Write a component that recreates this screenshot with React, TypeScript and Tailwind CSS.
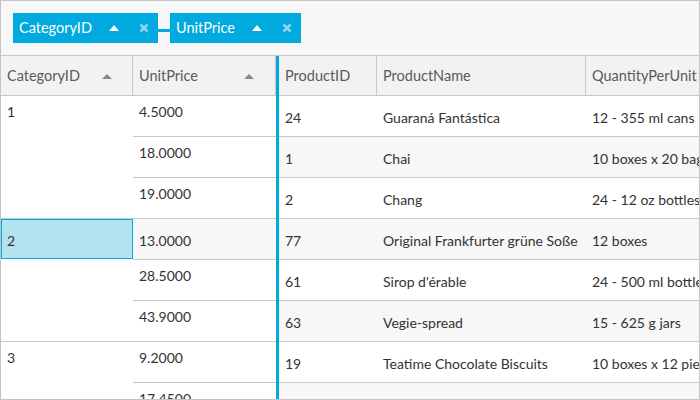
import React from "react";

const FONT = { fontFamily: 'Lato, "Noto Sans", sans-serif' };

function ChipArrow() {
  return (
    <svg width="10" height="6" viewBox="0 0 10 6" className="shrink-0">
      <polygon points="0,6 5,0 10,6" fill="#ffffff" />
    </svg>
  );
}

function ChipX() {
  return (
    <svg width="10" height="10" viewBox="0 0 10 10" className="shrink-0">
      <path d="M1.5 1.5 L8.5 8.5 M8.5 1.5 L1.5 8.5" stroke="#8fd5ef" strokeWidth="2.6" strokeLinecap="butt" />
    </svg>
  );
}

function HeadArrow() {
  return (
    <svg width="10" height="5" viewBox="0 0 10 5" className="shrink-0">
      <polygon points="0,5 5,0 10,5" fill="#8a8a8a" />
    </svg>
  );
}

function Chip({ label, width }: { label: string; width: string }) {
  return (
    <div className={`${width} h-[30px] bg-[#00a9de] flex items-center pl-[6px] pr-[9px] text-white text-[14.5px]`}>
      <span className="flex-1 leading-none">{label}</span>
      <ChipArrow />
      <div className="w-[20px]" />
      <ChipX />
    </div>
  );
}

type Row = { id: string; name: string; qty: string };

const rightRows: Row[] = [
  { id: "24", name: "Guaraná Fantástica", qty: "12 - 355 ml cans" },
  { id: "1", name: "Chai", qty: "10 boxes x 20 bags" },
  { id: "2", name: "Chang", qty: "24 - 12 oz bottles" },
  { id: "77", name: "Original Frankfurter grüne Soße", qty: "12 boxes" },
  { id: "61", name: "Sirop d'érable", qty: "24 - 500 ml bottles" },
  { id: "63", name: "Vegie-spread", qty: "15 - 625 g jars" },
  { id: "19", name: "Teatime Chocolate Biscuits", qty: "10 boxes x 12 pieces" },
  { id: "", name: "", qty: "" },
];

function PriceCell({ value, last, gray, center }: { value: string; last?: boolean; gray?: boolean; center?: boolean }) {
  return (
    <div
      className={`h-[41px] pl-[6px] whitespace-nowrap ${last ? "" : "border-b border-[#c8c8c8]"} ${gray ? "bg-[#f7f7f7]" : "bg-white"} ${center ? "flex items-center pt-[3px]" : "pt-[5px]"}`}
    >
      {value}
    </div>
  );
}

export default function App() {
  return (
    <div
      className="w-[700px] h-[400px] border border-[#c4c4c4] flex flex-col overflow-hidden bg-white text-[14px] text-[#333333]"
      style={FONT}
    >
      {/* group panel */}
      <div className="h-[55px] shrink-0 bg-[#f7f7f7] border-b border-[#c8c8c8] flex pl-[12px] pt-[12px]">
        <Chip label="CategoryID" width="w-[145px]" />
        <div className="w-[12px] h-[3px] mt-[16px] bg-[#00a9de]" />
        <Chip label="UnitPrice" width="w-[131px]" />
      </div>

      {/* main */}
      <div className="flex flex-1 min-h-0">
        {/* left frozen pane */}
        <div className="w-[275px] shrink-0 flex flex-col">
          <div className="h-[40px] shrink-0 flex bg-[#f2f2f2] border-b border-[#c8c8c8] text-[#5a5a5a] text-[14.5px]">
            <div className="w-[132px] border-r border-[#c8c8c8] flex items-center pl-[6px] pr-[20px] pt-[1px]">
              <span className="flex-1">CategoryID</span>
              <HeadArrow />
            </div>
            <div className="w-[143px] border-r border-[#c8c8c8] flex items-center pl-[6px] pr-[21px] pt-[1px]">
              <span className="flex-1">UnitPrice</span>
              <HeadArrow />
            </div>
          </div>

          {/* group 1 */}
          <div className="flex border-b border-[#c8c8c8] shrink-0">
            <div className="w-[132px] pl-[6px] pt-[5px]">1</div>
            <div className="w-[143px] flex flex-col">
              <PriceCell value="4.5000" />
              <PriceCell value="18.0000" />
              <div className="h-[40px] pl-[6px] pt-[5px]">19.0000</div>
            </div>
          </div>

          {/* group 2 */}
          <div className="flex border-b border-[#c8c8c8] shrink-0">
            <div className="w-[132px] flex flex-col">
              <div className="h-[40px] bg-[#b3e2f0] border border-[#00a9de] flex items-center pl-[5px] pt-[2px]">2</div>
            </div>
            <div className="w-[143px] flex flex-col">
              <PriceCell value="13.0000" gray center />
              <PriceCell value="28.5000" />
              <div className="h-[40px] pl-[6px] pt-[5px]">43.9000</div>
            </div>
          </div>

          {/* group 3 */}
          <div className="flex shrink-0">
            <div className="w-[132px] pl-[6px] pt-[5px]">3</div>
            <div className="w-[143px] flex flex-col">
              <PriceCell value="9.2000" />
              <PriceCell value="17.4500" />
            </div>
          </div>
        </div>

        {/* frozen splitter */}
        <div className="w-[3px] shrink-0 bg-[#00a9de]" />

        {/* right pane */}
        <div className="flex-1 min-w-0 flex flex-col">
          <div className="h-[40px] shrink-0 flex bg-[#f2f2f2] border-b border-[#c8c8c8] text-[#5a5a5a] text-[14.5px]">
            <div className="w-[98px] shrink-0 border-r border-[#c8c8c8] flex items-center pl-[6px] pt-[1px]">ProductID</div>
            <div className="w-[209px] shrink-0 border-r border-[#c8c8c8] flex items-center pl-[6px] pt-[1px]">ProductName</div>
            <div className="flex-1 min-w-0 flex items-center pl-[6px] pt-[1px] whitespace-nowrap overflow-hidden">QuantityPerUnit</div>
          </div>
          {rightRows.map((r, i) => (
            <div
              key={i}
              className={`h-[41px] shrink-0 flex items-center border-b border-[#c8c8c8] pt-[3px] ${i % 2 === 1 ? "bg-[#f7f7f7]" : "bg-white"}`}
            >
              <div className="w-[98px] shrink-0 pl-[6px]">{r.id}</div>
              <div className="w-[209px] shrink-0 pl-[6px] whitespace-nowrap overflow-hidden">{r.name}</div>
              <div className="flex-1 min-w-0 pl-[6px] whitespace-nowrap overflow-hidden">{r.qty}</div>
            </div>
          ))}
        </div>
      </div>
    </div>
  );
}
